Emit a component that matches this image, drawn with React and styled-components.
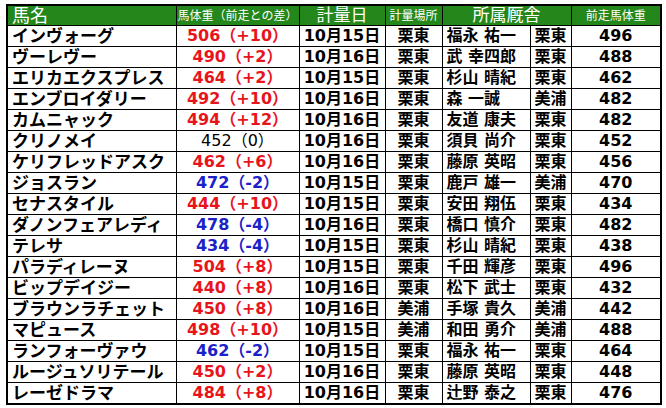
import React from "react";
import styled, { createGlobalStyle } from "styled-components";

const GlobalStyle = createGlobalStyle`
  body {
    margin: 0;
    background: #ffffff;
  }
`;

const Page = styled.div`
  padding: 4px 0 0 6px;
  font-family: "DejaVu Sans", "Noto Sans CJK JP", sans-serif;
`;

const Table = styled.table`
  border-collapse: collapse;
  table-layout: fixed;
  width: 654px;
  border: 2px solid #000;
`;

const HeadCell = styled.th`
  background: #23871b;
  color: #ffffff;
  font-weight: normal;
  font-size: ${(p) => p.$size || 12}px;
  height: 19px;
  padding: 0 ${(p) => (p.$align === "left" ? "4px" : "0")};
  text-align: ${(p) => p.$align || "center"};
  border: 1px solid #000;
  line-height: 1;
  white-space: nowrap;
`;

const Cell = styled.td`
  height: 20px;
  padding: 0 ${(p) => (p.$align === "left" ? "4px" : "0")};
  border: 1px solid #000;
  font-size: 16px;
  font-weight: ${(p) => (p.$light ? "normal" : "bold")};
  color: ${(p) => p.$color || "#000"};
  text-align: ${(p) => p.$align || "center"};
  line-height: 1;
  white-space: nowrap;
  overflow: hidden;
`;

const NameCell = styled(Cell)`
  font-size: 17px;
`;

const rows = [
  ["インヴォーグ", "506", "+10", "10月15日", "栗東", "福永 祐一", "栗東", "496"],
  ["ヴーレヴー", "490", "+2", "10月16日", "栗東", "武 幸四郎", "栗東", "488"],
  ["エリカエクスプレス", "464", "+2", "10月15日", "栗東", "杉山 晴紀", "栗東", "462"],
  ["エンブロイダリー", "492", "+10", "10月16日", "栗東", "森 一誠", "美浦", "482"],
  ["カムニャック", "494", "+12", "10月16日", "栗東", "友道 康夫", "栗東", "482"],
  ["クリノメイ", "452", "0", "10月16日", "栗東", "須貝 尚介", "栗東", "452"],
  ["ケリフレッドアスク", "462", "+6", "10月16日", "栗東", "藤原 英昭", "栗東", "456"],
  ["ジョスラン", "472", "-2", "10月15日", "栗東", "鹿戸 雄一", "美浦", "470"],
  ["セナスタイル", "444", "+10", "10月15日", "栗東", "安田 翔伍", "栗東", "434"],
  ["ダノンフェアレディ", "478", "-4", "10月16日", "栗東", "橋口 慎介", "栗東", "482"],
  ["テレサ", "434", "-4", "10月15日", "栗東", "杉山 晴紀", "栗東", "438"],
  ["パラディレーヌ", "504", "+8", "10月15日", "栗東", "千田 輝彦", "栗東", "496"],
  ["ビップデイジー", "440", "+8", "10月16日", "栗東", "松下 武士", "栗東", "432"],
  ["ブラウンラチェット", "450", "+8", "10月16日", "美浦", "手塚 貴久", "美浦", "442"],
  ["マピュース", "498", "+10", "10月15日", "美浦", "和田 勇介", "美浦", "488"],
  ["ランフォーヴァウ", "462", "-2", "10月15日", "栗東", "福永 祐一", "栗東", "464"],
  ["ルージュソリテール", "450", "+2", "10月16日", "栗東", "藤原 英昭", "栗東", "448"],
  ["レーゼドラマ", "484", "+8", "10月16日", "栗東", "辻野 泰之", "栗東", "476"],
];

// red for a gain, blue for a loss, plain black when unchanged
const diffColor = (d) => (d.startsWith("+") ? "#e8141c" : d.startsWith("-") ? "#1a22c8" : "#000");

export default function App() {
  return (
    <Page>
      <GlobalStyle />
      <Table>
        <colgroup>
          <col style={{ width: 169 }} />
          <col style={{ width: 123 }} />
          <col style={{ width: 86 }} />
          <col style={{ width: 57 }} />
          <col style={{ width: 88 }} />
          <col style={{ width: 41 }} />
          <col style={{ width: 90 }} />
        </colgroup>
        <thead>
          <tr>
            <HeadCell $align="left" $size={18}>馬名</HeadCell>
            <HeadCell $size={12}>馬体重（前走との差）</HeadCell>
            <HeadCell $size={17}>計量日</HeadCell>
            <HeadCell $size={12}>計量場所</HeadCell>
            <HeadCell colSpan={2} $size={17}>所属厩舎</HeadCell>
            <HeadCell $size={12}>前走馬体重</HeadCell>
          </tr>
        </thead>
        <tbody>
          {rows.map((r) => (
            <tr key={r[0]}>
              <NameCell $align="left">{r[0]}</NameCell>
              <Cell $color={diffColor(r[2])} $light={r[2] === "0"}>
                {r[1]}（{r[2]}）
              </Cell>
              <Cell>{r[3]}</Cell>
              <Cell>{r[4]}</Cell>
              <Cell $align="left">{r[5]}</Cell>
              <Cell>{r[6]}</Cell>
              <Cell>{r[7]}</Cell>
            </tr>
          ))}
        </tbody>
      </Table>
    </Page>
  );
}
